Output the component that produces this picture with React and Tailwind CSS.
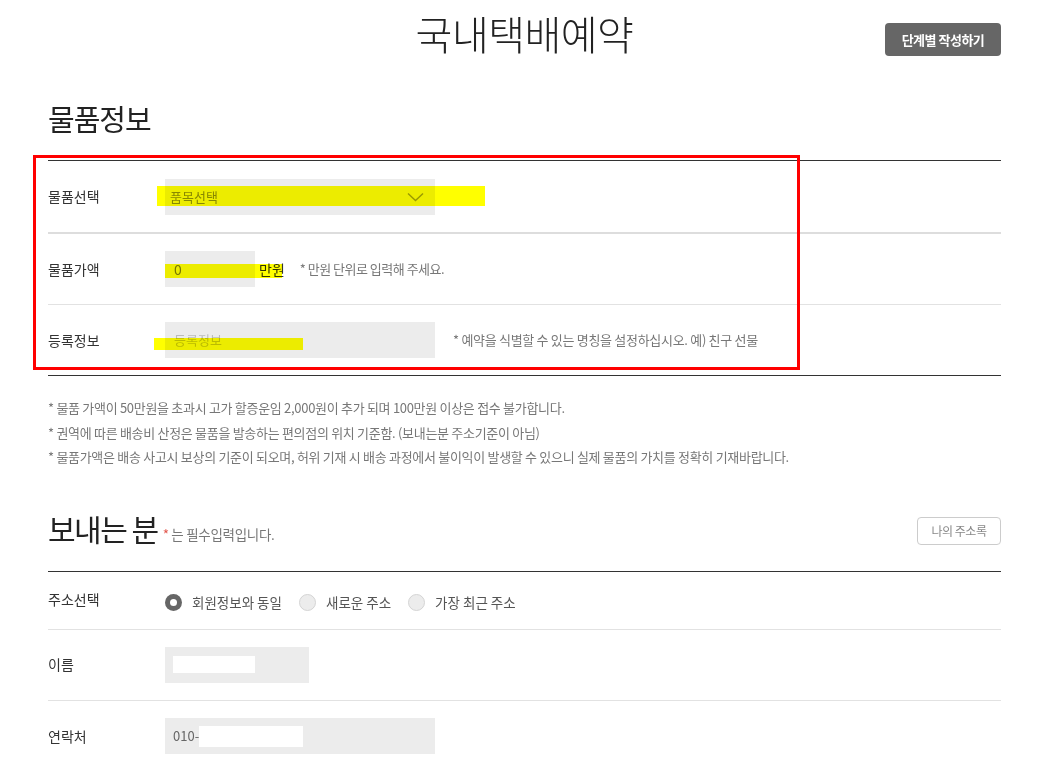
const font = { fontFamily: '"Noto Sans CJK KR", "Noto Sans", sans-serif' };

function Highlight({ className }) {
  // yellow marker laid over the form
  return <div className={"absolute bg-[#ffff00] mix-blend-multiply pointer-events-none " + className} />;
}

function Radio({ checked, label }) {
  return (
    <label className="flex items-center gap-[10px] mr-[17px]">
      {checked ? (
        <span className="w-[17px] h-[17px] rounded-full bg-[#666] flex items-center justify-center">
          <span className="w-[7px] h-[7px] rounded-full bg-white" />
        </span>
      ) : (
        <span className="w-[17px] h-[17px] rounded-full bg-[#ececec] border border-[#d4d4d4]" />
      )}
      <span className="text-[13.5px] text-[#555]">{label}</span>
    </label>
  );
}

function Row({ label, children, border = "border-b border-[#e2e2e2]", h = "h-[71px]", labelClass = "" }) {
  return (
    <div className={"flex items-center " + h + " " + border}>
      <div className={"w-[117px] text-[14px] text-[#333] " + labelClass}>{label}</div>
      {children}
    </div>
  );
}

export default function App() {
  return (
    <div className="h-[759px] overflow-hidden bg-white" style={font}>
      <div className="w-[953px] mx-auto relative">
        <div className="grid grid-cols-[1fr_auto_1fr] items-start pt-[7px]">
          <div />
          <h1 className="text-[40px] leading-[53px] tracking-[-0.5px] text-[#222] font-light">국내택배예약</h1>
          <div className="flex justify-end pt-[16px]">
            <button className="w-[116px] h-[33px] rounded-[4px] bg-[#666] text-white text-[13px] font-bold tracking-[-0.5px]">
              단계별 작성하기
            </button>
          </div>
        </div>

        <h2 className="mt-[40px] text-[29px] leading-[36px] text-[#222] tracking-[-1px]">물품정보</h2>

        <div className="relative mt-[24px] border-t border-[#333]">
          <Row label="물품선택" h="h-[73px]" border="border-b-2 border-[#dddddd]">
            <div className="w-[270px] h-[36px] bg-[#ececec] flex items-center justify-between pl-[5px] pr-[10px]">
              <span className="text-[13px] text-[#888]">품목선택</span>
              <svg width="17" height="10" viewBox="0 0 17 10" fill="none" className="mr-[1px]">
                <polyline points="1,1.5 8.5,8.5 16,1.5" stroke="#999" strokeWidth="1.4" />
              </svg>
            </div>
          </Row>
          <Row label="물품가액">
            <div className="w-[90px] h-[36px] bg-[#ececec] flex items-center pl-[9px] text-[14px] text-[#777]">0</div>
            <span className="ml-[4px] text-[14px] text-[#333]">만원</span>
            <span className="ml-[15px] text-[13px] text-[#777] tracking-[-0.5px]">* 만원 단위로 입력해 주세요.</span>
          </Row>
          <Row label="등록정보" border="border-b border-[#333]">
            <div className="w-[270px] h-[36px] bg-[#ececec] flex items-center pl-[9px] text-[13px] text-[#bbb]">등록정보</div>
            <span className="ml-[18px] text-[13px] text-[#777] tracking-[-0.3px]">
              * 예약을 식별할 수 있는 명칭을 설정하십시오. 예) 친구 선물
            </span>
          </Row>

          <Highlight className="left-[109px] top-[25px] w-[328px] h-[20px]" />
          <Highlight className="left-[117px] top-[103px] w-[117px] h-[14px]" />
          <Highlight className="left-[106px] top-[177px] w-[149px] h-[12px]" />
          <div className="absolute left-[-15px] top-[-6px] w-[767px] h-[215px] border-[3px] border-[#ff0000] pointer-events-none" />
        </div>

        <div className="mt-[22px] flex flex-col gap-[5px] text-[13px] leading-[19.5px] text-[#777] tracking-[-0.3px]">
          <p>* 물품 가액이 50만원을 초과시 고가 할증운임 2,000원이 추가 되며 100만원 이상은 접수 불가합니다.</p>
          <p>* 권역에 따른 배송비 산정은 물품을 발송하는 편의점의 위치 기준함. (보내는분 주소기준이 아님)</p>
          <p>* 물품가액은 배송 사고시 보상의 기준이 되오며, 허위 기재 시 배송 과정에서 불이익이 발생할 수 있으니 실제 물품의 가치를 정확히 기재바랍니다.</p>
        </div>

        <div className="mt-[42px] flex items-end justify-between">
          <div className="flex items-end gap-[5px]">
            <h2 className="text-[30px] leading-[38px] text-[#222] tracking-[-1.5px]">보내는 분</h2>
            <span className="text-[13.5px] text-[#777] tracking-[-0.3px] mb-[2px]">
              <span className="text-[#e2554b]">*</span> 는 필수입력입니다.
            </span>
          </div>
          <button className="w-[84px] h-[28px] mb-[2px] rounded-[4px] border border-[#cccccc] text-[12px] text-[#888] tracking-[-0.5px]">
            나의 주소록
          </button>
        </div>

        <div className="mt-[24px] border-t border-[#333]">
          <Row label="주소선택" h="h-[58px]" labelClass="-mt-[1px]">
            <div className="flex items-center mt-[5px]">
              <Radio checked label="회원정보와 동일" />
              <Radio label="새로운 주소" />
              <Radio label="가장 최근 주소" />
            </div>
          </Row>
          <Row label="이름">
            <div className="w-[144px] h-[36px] bg-[#ececec] flex items-center pl-[8px]">
              <div className="w-[82px] h-[17px] bg-white" />
            </div>
          </Row>
          <Row label="연락처" border="">
            <div className="w-[270px] h-[36px] bg-[#ececec] flex items-center pl-[8px] text-[13px] text-[#666]">
              010-
              <div className="w-[104px] h-[21px] bg-white" />
            </div>
          </Row>
        </div>
      </div>
    </div>
  );
}
